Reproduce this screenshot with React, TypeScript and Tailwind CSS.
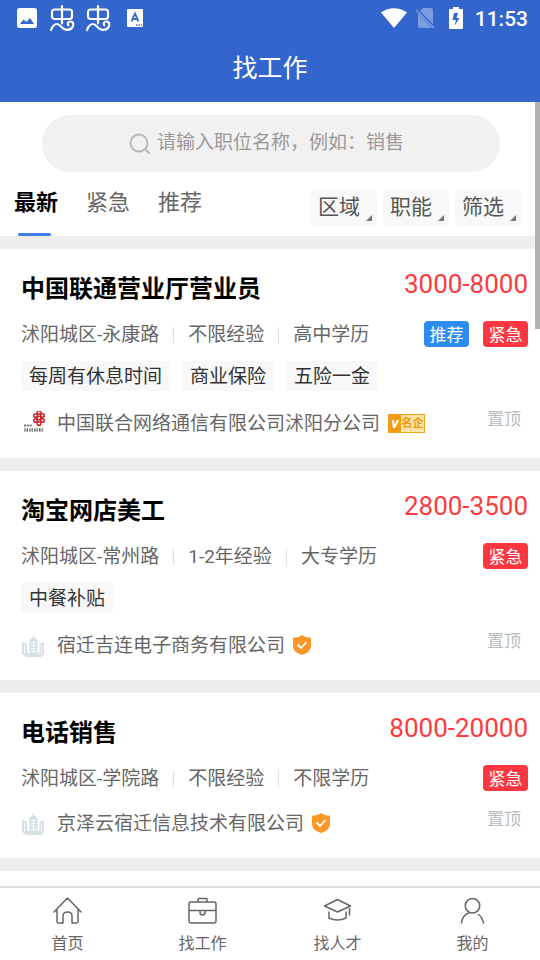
import type { ReactNode } from 'react'

type Job = {
  id: number
  title: string
  salary: string
  info: string[]
  recommended?: boolean
  urgent?: boolean
  tags?: string[]
  company: string
  logo: 'unicom' | 'building'
  badge: 'famous' | 'verified'
}

const JOBS: Job[] = [
  {
    id: 1,
    title: '中国联通营业厅营业员',
    salary: '3000-8000',
    info: ['沭阳城区-永康路', '不限经验', '高中学历'],
    recommended: true,
    urgent: true,
    tags: ['每周有休息时间', '商业保险', '五险一金'],
    company: '中国联合网络通信有限公司沭阳分公司',
    logo: 'unicom',
    badge: 'famous',
  },
  {
    id: 2,
    title: '淘宝网店美工',
    salary: '2800-3500',
    info: ['沭阳城区-常州路', '1-2年经验', '大专学历'],
    urgent: true,
    tags: ['中餐补贴'],
    company: '宿迁吉连电子商务有限公司',
    logo: 'building',
    badge: 'verified',
  },
  {
    id: 3,
    title: '电话销售',
    salary: '8000-20000',
    info: ['沭阳城区-学院路', '不限经验', '不限学历'],
    urgent: true,
    company: '京泽云宿迁信息技术有限公司',
    logo: 'building',
    badge: 'verified',
  },
]

const SORTS = ['最新', '紧急', '推荐']
const FILTERS = ['区域', '职能', '筛选']

function BugIcon() {
  return (
    <svg viewBox="0 0 26 28" className="h-7 w-[26px]" fill="none" stroke="#fff" strokeWidth="2.2" strokeLinecap="round" strokeLinejoin="round">
      <rect x="3" y="5.500" width="20" height="9.500" rx="2.5" />
      <path d="M13 2v17.500" />
      <path d="M2 26c1.500-4 3.500-6 6-6 3.500 0 4.500 5.500 9.500 5.800 4 .2 6.800-2 6.800-5 0-2-1.300-3.300-3-3.300-2.200 0-3.300 2.200-2 3.800" />
    </svg>
  )
}

function StatusBar() {
  return (
    <div className="flex h-9 items-center px-4">
      <svg viewBox="0 0 20 20" className="ml-px size-5">
        <path fill="#fff" fillRule="evenodd" d="M2.500 0h15A2.500 2.500 0 0 1 20 2.500v15a2.500 2.500 0 0 1-2.500 2.500h-15A2.500 2.500 0 0 1 0 17.500v-15A2.500 2.500 0 0 1 2.500 0zM3 16h14l-4-6-3.500 4-3-2.500z" />
      </svg>
      <div className="ml-3 flex gap-2.5">
        <BugIcon />
        <BugIcon />
      </div>
      <svg viewBox="0 0 16 18" className="ml-4 h-[18px] w-4">
        <rect width="16" height="18" rx="1" fill="#fff" />
        <path d="M4.500 12.500 8 4.500l3.500 8M5.800 10h4.400" fill="none" stroke="#36c" strokeWidth="1.800" />
        <path d="M9 16h1.500M11.500 16H13M14 16h1" stroke="#36c" strokeWidth="1.500" />
      </svg>
      <div className="ml-auto flex items-center">
        <svg viewBox="0 0 26 20" className="h-5 w-[26px]">
          <path fill="#fff" d="M0 4.500C8-1.200 18-1.200 26 4.500L13 20z" />
        </svg>
        <svg viewBox="0 0 20 20" className="ml-2 size-5">
          <path fill="#7b9ce0" d="M8 0h8a2 2 0 0 1 2 2v14L5 3zM3 5.500 17 20H5a2 2 0 0 1-2-2z" />
          <path d="m1 2 18 18" stroke="#7b9ce0" strokeWidth="1.600" />
        </svg>
        <svg viewBox="0 0 14 22" className="ml-3.5 h-[22px] w-3.5">
          <path fill="#fff" fillRule="evenodd" d="M4 0h6v2h3a1 1 0 0 1 1 1v18a1 1 0 0 1-1 1H1a1 1 0 0 1-1-1V3a1 1 0 0 1 1-1h3zM5 6l-1.500 7H7l-1.500 6 5-8H7.500L9 6z" />
        </svg>
        <span className="ml-3 -mr-1 pt-px font-[Roboto] text-[21px] leading-6 font-medium">11:53</span>
      </div>
    </div>
  )
}

function UnicomLogo() {
  return (
    <svg viewBox="0 0 24 24" className="size-6 shrink-0">
      <g fill="none" stroke="#d2232e" strokeWidth="1.500">
        <circle cx="18" cy="1.500" r="1.800" />
        <circle cx="14.500" cy="4.500" r="1.800" />
        <circle cx="21.500" cy="4.500" r="1.800" />
        <circle cx="18" cy="7" r="1.800" />
        <circle cx="14.500" cy="9.500" r="1.800" />
        <circle cx="21.500" cy="9.500" r="1.800" />
        <circle cx="18" cy="12.500" r="1.800" />
      </g>
      <path d="M3 14.500h8" stroke="#777" strokeWidth="1.800" strokeDasharray="2 .8" />
      <path d="M3 19h20" stroke="#555" strokeWidth="3" strokeDasharray="1.600 .9" />
      <path d="M3 19h20" stroke="#fff" strokeWidth=".8" strokeDasharray="2.500 1.700" />
    </svg>
  )
}

function BuildingLogo() {
  return (
    <svg viewBox="0 0 24 24" className="size-6 shrink-0" fill="#d5e0e4">
      <path d="m12.500 0 .5 4 3.500 3v14h-8V7L12 4zM1 9l5 2v8l2.500 2h8l2-2v-8l4.500-2v12l-3 3H5l-4-3z" />
      <path d="M10 9.500h5M10 12.500h5M10 15.500h5M10 18.500h5M3.500 12v9M20.500 12v9M12.500 8v12" stroke="#fff" strokeWidth=".8" />
    </svg>
  )
}

function FamousBadge() {
  return (
    <span className="ml-2 flex h-[19px] w-[37px] items-center border border-[#f0a31c] bg-[#fde3a4] text-[#ec9a16]">
      <span className="flex h-full w-3 items-center justify-center bg-[#f39c12] text-[15px] leading-4 font-bold text-white italic">v</span>
      <span className="flex-1 pt-px text-center text-[11px] leading-4 font-bold">名企</span>
    </span>
  )
}

function VerifiedBadge() {
  return (
    <svg viewBox="0 0 18 20" className="ml-2 h-5 w-[18px]">
      <path fill="#fb9627" d="M9 0c2.500 1.800 5.500 2.600 9 2.800V11c0 4.500-4 7.500-9 9-5-1.500-9-4.500-9-9V2.800C3.500 2.600 6.500 1.800 9 0z" />
      <path d="m4.500 9.500 3.500 3.500 5.500-6" fill="none" stroke="#fff" strokeWidth="1.800" />
    </svg>
  )
}

function Flag({ className, children }: { className: string; children: ReactNode }) {
  return <span className={`flex h-[26px] w-[45px] items-center justify-center rounded-[4px] pt-[3px] text-[17px] text-white ${className}`}>{children}</span>
}

function JobCard({ job }: { job: Job }) {
  return (
    <article className="border-b-[13px] border-[#eee] bg-white pt-6 pr-3 pb-[23px] pl-[21px]">
      <div className="flex h-[30px] justify-between">
        <h2 className="text-2xl leading-8 font-bold text-black">{job.title}</h2>
        <span className="font-[Roboto] text-[26px] leading-[22px] text-[#fd3b3f]">{job.salary}</span>
      </div>
      <div className="mt-[18px] flex h-[26px] items-center justify-between">
        <ul className="flex items-center divide-x divide-[#ddd] pt-0.5 text-[19px] leading-4 text-[#666]">
          {job.info.map((text) => (
            <li key={text} className="px-3.5 first:pl-0">{text}</li>
          ))}
        </ul>
        <div className="flex gap-3.5">
          {job.recommended && <Flag className="bg-[#2d8cf0]">推荐</Flag>}
          {job.urgent && <Flag className="bg-[#fd3640]">紧急</Flag>}
        </div>
      </div>
      {job.tags && (
        <ul className="mt-3.5 flex h-[30px] gap-3 text-[19px] leading-8 text-[#333]">
          {job.tags.map((tag) => (
            <li key={tag} className="rounded-[3px] bg-[#f8f8f8] px-2">{tag}</li>
          ))}
        </ul>
      )}
      <div className="mt-5 flex h-6 items-center">
        {job.logo === 'unicom' ? <UnicomLogo /> : <BuildingLogo />}
        <a href="#company" className="ml-3 pt-0.5 text-[19px] leading-6 text-[#666]">{job.company}</a>
        {job.badge === 'famous' ? <FamousBadge /> : <VerifiedBadge />}
        <span className="mr-[7px] ml-auto self-start text-[17px] leading-4 text-[#bbb]">置顶</span>
      </div>
    </article>
  )
}

const NAV = [
  { label: '首页', paths: 'M1 16 14.500 2 28 16M4 14v11.500a1.500 1.500 0 0 0 1.500 1.500H10v-7q0-4 4.500-4t4.500 4v7h4.500a1.500 1.500 0 0 0 1.500-1.500V14' },
  { label: '找工作', paths: 'M3 6h23a2 2 0 0 1 2 2v17a2 2 0 0 1-2 2H3a2 2 0 0 1-2-2V8a2 2 0 0 1 2-2zM10 6V3.500a1 1 0 0 1 1-1h7a1 1 0 0 1 1 1V6M1 14.500h27M12 14.500v2a2.500 2.500 0 0 0 5 0v-2' },
  { label: '找人才', paths: 'M1.500 10 14.500 3.500 27.500 10l-13 6zM26.500 10v9M6 16v6q8.500 4 17 0v-6' },
  { label: '我的', paths: 'M14.500 2.500a7 7 0 1 1 0 14.500 7 7 0 1 1 0-14.500M3.500 27q1-8 8-10.500M20.500 18.500q4 3 5 8.500' },
]

export default function App() {
  return (
    <div className="flex h-screen flex-col overflow-hidden bg-white font-['Roboto','Noto_Sans_CJK_SC',sans-serif]">
      <header className="h-[102px] shrink-0 bg-[#36c] text-white">
        <StatusBar />
        <h1 className="text-center text-[25px] leading-[66px]">找工作</h1>
      </header>

      <main className="relative flex-1 overflow-hidden">
        <div className="absolute top-0 right-0 h-[227px] w-[5px] bg-[#b2b2b2]" />
        <form className="mx-10 mt-[13px] ml-[42px] flex h-[57px] items-center justify-center gap-1.5 rounded-full bg-[#f1f1f1]">
          <svg viewBox="0 0 22 22" className="size-[22px]" fill="none" stroke="#b8b8b8" strokeWidth="1.800">
            <circle cx="10" cy="10" r="8.500" />
            <path d="m16.500 16.500 4 4" strokeWidth="2.200" />
          </svg>
          <input
            type="text"
            aria-label="搜索职位"
            placeholder="请输入职位名称，例如：销售"
            className="w-[256px] bg-transparent text-[19px] outline-none placeholder:text-[#999]"
          />
        </form>

        <div className="box-content flex h-16 items-start justify-between border-b-[13px] border-[#eee] pr-[19px] pl-3.5">
          <div className="flex gap-7">
            {SORTS.map((sort, i) => (
              <button key={sort} className={`relative h-16 pb-1 text-[22px] ${i === 0 ? 'font-bold text-black' : 'text-[#666]'}`}>
                {sort}
                {i === 0 && <span className="absolute bottom-0 left-1 h-[3px] w-[33px] rounded-full bg-[#3f7cec]" />}
              </button>
            ))}
          </div>
          <div className="mt-[18px] flex gap-1.5">
            {FILTERS.map((filter) => (
              <button key={filter} className="flex h-[35px] items-center gap-1.5 rounded-[4px] bg-[#f8f8f8] pr-[5px] pl-[7px] text-[21px] text-[#555]">
                {filter}
                <svg viewBox="0 0 6 6" className="mb-1 size-1.5 self-end">
                  <path d="M6 0v6H0z" fill="#777" />
                </svg>
              </button>
            ))}
          </div>
        </div>

        {JOBS.map((job) => (
          <JobCard key={job.id} job={job} />
        ))}
      </main>

      <nav className="flex h-[74px] shrink-0 border-t-2 border-[#ddd] bg-white">
        {NAV.map(({ label, paths }) => (
          <a key={label} href="#nav" className="flex flex-1 flex-col items-center gap-1 pt-2 text-[16px] leading-[30px] text-[#666]">
            <svg viewBox="0 0 29 29" className="size-[29px] shrink-0" fill="none" stroke="#666" strokeWidth="1.500" strokeLinecap="round" strokeLinejoin="round">
              <path d={paths} />
            </svg>
            {label}
          </a>
        ))}
      </nav>
    </div>
  )
}
